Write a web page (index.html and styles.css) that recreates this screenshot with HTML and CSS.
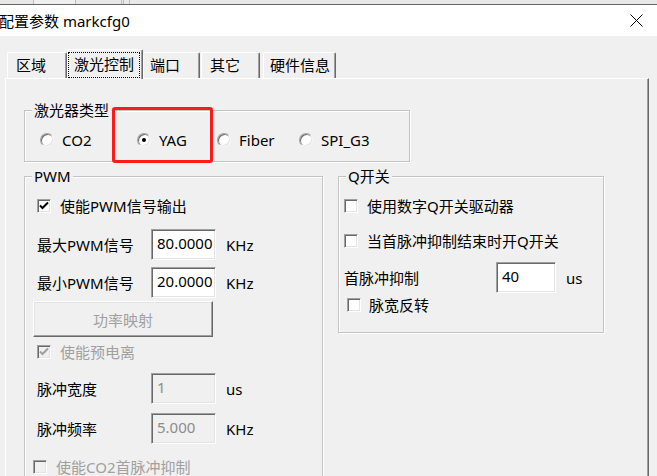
FILE: index.html
```html
<!DOCTYPE html>
<html lang="zh">
<head>
<meta charset="utf-8">
<title>配置参数 markcfg0</title>
<link rel="stylesheet" href="styles.css">
</head>
<body>
<div class="topstrip">
  <span class="ts ts1"></span><span class="ts ts2"></span><span class="ts ts3"></span><span class="ts ts4"></span><span class="ts ts5"></span>
</div>
<div class="titlebar">
  <span class="title">配置参数 markcfg0</span>
  <svg class="close" width="13" height="13" viewBox="0 0 13 13"><path d="M0.5 0.5L12.5 12.5M12.5 0.5L0.5 12.5" stroke="#000" stroke-width="1" fill="none"/></svg>
</div>
<div class="dlg">
  <div class="tabs">
    <div class="tab t1">区域</div>
    <div class="tab sel"><span class="focus">激光控制</span></div>
    <div class="tab t3">端口</div>
    <div class="tab t4">其它</div>
    <div class="tab t5">硬件信息</div>
  </div>
  <div class="panel">
    <div class="grp g-type">
      <span class="lg lg-type">激光器类型</span>
      <div class="radios">
        <div class="radio r1"><span class="rb"></span>CO2</div>
        <div class="radio r2"><span class="rb"><span class="dot"></span></span>YAG<span class="mark"></span></div>
        <div class="radio r3"><span class="rb"></span>Fiber</div>
        <div class="radio r4"><span class="rb"></span>SPI_G3</div>
      </div>
    </div>
    <div class="row2">
      <div class="grp g-pwm">
        <span class="lg lg-pwm">PWM</span>
        <div class="cb"><span class="box"><svg width="12" height="12" viewBox="0 0 12 12"><path d="M2 5.5L4.5 8L10 2.5" stroke="#000" stroke-width="2" fill="none"/></svg></span>使能PWM信号输出</div>
        <div class="frow r-max"><span class="lab">最大PWM信号</span><span class="inp">80.0000</span><span class="unit">KHz</span></div>
        <div class="frow r-min"><span class="lab">最小PWM信号</span><span class="inp">20.0000</span><span class="unit">KHz</span></div>
        <div class="btn">功率映射</div>
        <div class="cb dis r-pre"><span class="box"><svg width="12" height="12" viewBox="0 0 12 12"><path d="M2 5.5L4.5 8L10 2.5" stroke="#a0a0a0" stroke-width="2" fill="none"/></svg></span>使能预电离</div>
        <div class="frow r-pw"><span class="lab">脉冲宽度</span><span class="inp dis">1</span><span class="unit">us</span></div>
        <div class="frow r-pf"><span class="lab">脉冲频率</span><span class="inp dis">5.000</span><span class="unit">KHz</span></div>
        <div class="cb dis r-co2"><span class="box"></span>使能CO2首脉冲抑制</div>
      </div>
      <div class="grp g-q">
        <span class="lg lg-q">Q开关</span>
        <div class="cb q1"><span class="box"></span>使用数字Q开关驱动器</div>
        <div class="cb q2"><span class="box"></span>当首脉冲抑制结束时开Q开关</div>
        <div class="frow q3"><span class="lab qlab">首脉冲抑制</span><span class="inp qinp">40</span><span class="unit">us</span></div>
        <div class="cb q4"><span class="box"></span>脉宽反转</div>
      </div>
    </div>
  </div>
</div>
</body>
</html>
```
FILE: styles.css
```css
* { box-sizing: border-box; }
html, body { margin: 0; padding: 0; overflow: hidden; }
body {
  width: 657px;
  height: 476px;
  background: #f0f0f0;
  font-family: "Noto Sans", "Noto Sans CJK SC", sans-serif;
  font-size: 15px;
  color: #000;
}

/* strip of the window behind */
.topstrip {
  height: 5px;
  display: flex;
  background: #e8e8e8;
  border-bottom: 1px solid #666;
}
.ts { height: 4px; border-right: 1px solid #bdbdbd; }
.ts1 { width: 34px; }
.ts2 { width: 42px; background: #efefef; }
.ts3 { width: 46px; }
.ts4 { width: 2px; }
.ts5 { width: 6px; }

/* title bar */
.titlebar {
  height: 31px;
  background: #fff;
  display: flex;
  align-items: center;
  justify-content: space-between;
  padding-right: 14px;
}
.title { margin-left: -1px; line-height: 20px; }
.close { display: block; }

/* tabs */
.dlg { padding-top: 13px; }
.tabs {
  display: flex;
  align-items: flex-end;
  height: 29px;
  padding-left: 7px;
  position: relative;
  z-index: 1;
}
.tab {
  height: 26px;
  line-height: 24px;
  padding-left: 7px;
  white-space: nowrap;
  border-top: 1px solid #fff;
  border-left: 1px solid #fff;
  border-right: 1px solid #696969;
  box-shadow: inset -1px 0 0 #a0a0a0;
  border-radius: 2px 2px 0 0;
  background: #f0f0f0;
}
.t1 { width: 60px; padding-left: 8px; }
.sel {
  width: 76px;
  height: 30px;
  margin-bottom: -1px;
  padding: 2px 2px 0 0;
}
.focus {
  display: block;
  height: 26px;
  line-height: 22px;
  padding-left: 5px;
  border: 1px dotted #000;
}
.t3 { width: 57px; padding-left: 6px; }
.t4 { width: 59px; margin-left: 1px; padding-left: 8px; }
.t5 { width: 73px; margin-left: 3px; padding-left: 6px; }

/* panel */
.panel {
  margin-left: 5px;
  width: 644px;
  height: 398px;
  overflow: hidden;
  border-top: 1px solid #fff;
  border-left: 1px solid #fff;
  border-right: 1px solid #696969;
  box-shadow: inset -1px 0 0 #a0a0a0;
  padding: 31px 0 0 18px;
}

/* group boxes */
.grp {
  border: 1px solid #c4c4c4;
  box-shadow: 1px 1px 0 #fff, inset 1px 1px 0 #fff;
}
.lg {
  display: block;
  width: fit-content;
  margin: -11px 0 10px 7px;
  padding: 0 2px;
  line-height: 20px;
  height: 20px;
  background: #f0f0f0;
}
.lg-type { margin-left: -8px; }
.lg-pwm { margin-left: -5px; }
.lg-q { margin-left: 2px; }

.g-type { width: 386px; padding: 0 0 11px 15px; }
.radios { display: flex; height: 20px; align-items: center; }
.radio { display: flex; align-items: center; gap: 8px; position: relative; line-height: 20px; }
.r1 { width: 97px; }
.r2 { width: 80px; }
.r3 { width: 82px; }
.rb {
  width: 14px;
  height: 14px;
  border-radius: 50%;
  background: #fff;
  border: 1px solid;
  border-color: #a0a0a0 #f4f4f4 #f4f4f4 #a0a0a0;
  box-shadow: inset 1px 1px 0 #696969, inset -1px -1px 0 #e3e3e3;
  display: flex;
  align-items: center;
  justify-content: center;
}
.dot { width: 4px; height: 4px; border-radius: 50%; background: #000; }
.mark {
  position: absolute;
  left: -25px;
  top: -23px;
  width: 101px;
  height: 56px;
  border: 3px solid #ff1a1a;
  border-radius: 3px;
}

.row2 { display: flex; gap: 15px; margin-top: 14px; align-items: flex-start; }
.g-pwm { width: 299px; height: 320px; padding: 0 0 0 12px; }
.g-q { width: 266px; padding: 0 0 17px 5px; }

/* checkboxes */
.cb { display: flex; align-items: center; gap: 9px; height: 20px; line-height: 20px; }
.box {
  width: 14px;
  height: 14px;
  background: #fff;
  border: 1px solid;
  border-color: #a0a0a0 #fff #fff #a0a0a0;
  box-shadow: inset 1px 1px 0 #696969, inset -1px -1px 0 #e3e3e3;
  display: flex;
  align-items: center;
  justify-content: center;
  flex: none;
}
.box svg { display: block; }
.cb.dis { color: #a0a0a0; }
.cb.dis .box { background: #f0f0f0; }

/* field rows */
.frow { display: flex; align-items: center; height: 31px; }
.lab { width: 114px; }
.qlab { width: 152px; }
.inp {
  width: 65px;
  height: 31px;
  line-height: 27px;
  padding-left: 5px;
  background: #fff;
  border: 1px solid;
  border-color: #a0a0a0 #fff #fff #a0a0a0;
  box-shadow: inset 1px 1px 0 #696969, inset -1px -1px 0 #e3e3e3;
}
.inp.dis { background: #f0f0f0; color: #8c8c8c; }
.qinp { width: 60px; }
.unit { margin-left: 10px; }

.r-max { margin-top: 13px; }
.r-min { margin-top: 7px; }
.btn {
  width: 180px;
  height: 36px;
  margin: 3px 0 0 -4px;
  border: 1px solid;
  border-color: #fff #696969 #696969 #fff;
  box-shadow: inset -1px -1px 0 #a0a0a0, inset 1px 1px 0 #e3e3e3;
  color: #a0a0a0;
  display: flex;
  align-items: center;
  justify-content: center;
}
.r-pre { margin-top: 5px; }
.r-pw { margin-top: 11px; }
.r-pf { margin-top: 9px; }
.r-co2 { margin-top: 13px; margin-left: -4px; }

.q1 { margin-top: 1px; }
.q2 { margin-top: 15px; }
.q3 { margin-top: 11px; }
.q4 { margin-top: 2px; margin-left: 3px; gap: 8px; }
```
